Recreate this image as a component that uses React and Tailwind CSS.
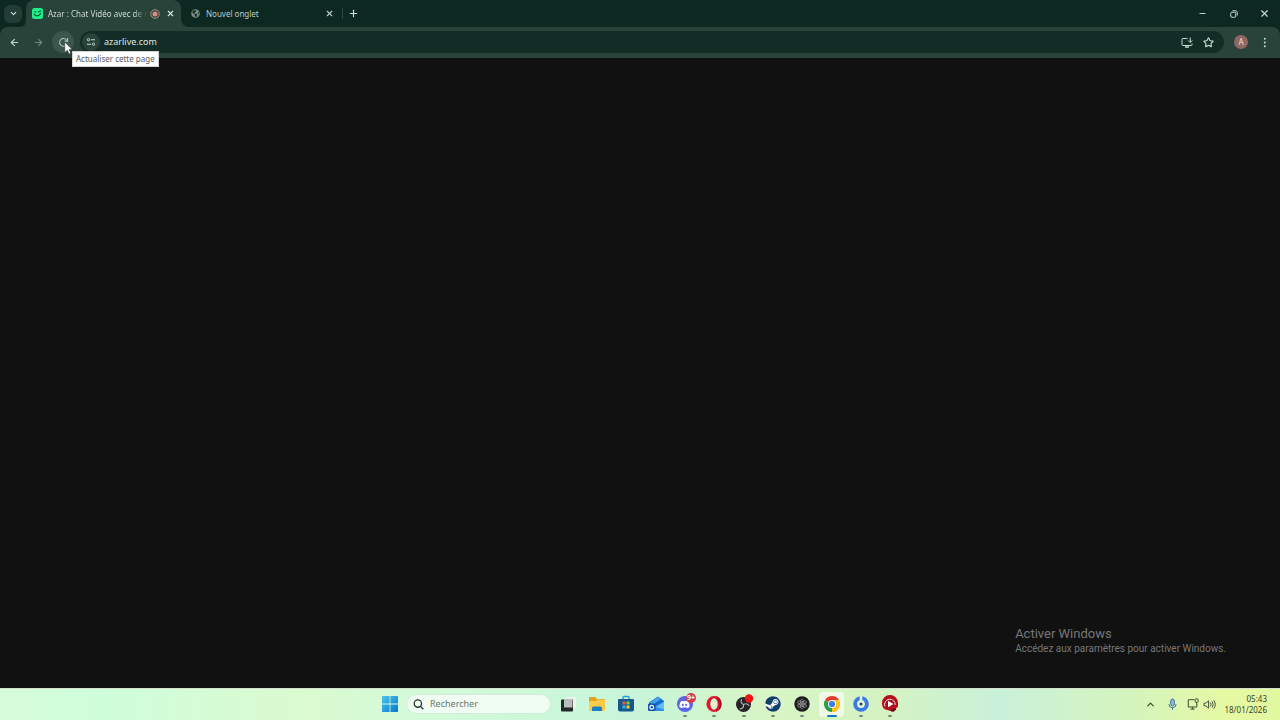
import { ArrowLeft, ArrowRight, ChevronDown, ChevronUp, Minus, Plus, Star, X } from 'lucide-react';
import { FaDiscord, FaGlobeAmericas, FaSteam } from 'react-icons/fa';

function AzarIcon() {
  return (
    <svg viewBox="0 0 22 22" className="size-[11px] shrink-0">
      <rect width="22" height="22" rx="5" fill="#1cf08a" />
      <path d="M4.500 12c2.500 5.500 10 5 12.500-1" fill="none" stroke="#0c5038" strokeWidth="2.200" strokeLinecap="round" />
      <circle cx="6.500" cy="7.500" r="1.700" fill="#0c5038" />
      <path d="M12.500 8l5-2" stroke="#0c5038" strokeWidth="2.200" strokeLinecap="round" />
    </svg>
  );
}

function RecordingIcon() {
  return (
    <svg viewBox="0 0 20 20" className="size-[10px] shrink-0">
      <circle cx="10" cy="10" r="8.500" fill="none" stroke="#bd9a8e" strokeWidth="1.800" />
      <circle cx="10" cy="10" r="5" fill="#dc8d83" />
    </svg>
  );
}

function ReloadIcon() {
  return (
    <svg viewBox="0 0 20 20" className="size-[11px]" fill="none" stroke="#b4c8c0" strokeWidth="1.900">
      <path d="M16.500 12A7 7 0 1 1 15.500 5.500L17 7" />
      <path d="M17.500 2v5.500H12" />
    </svg>
  );
}

function TuneIcon() {
  return (
    <svg viewBox="0 0 20 20" className="size-[10px]" fill="none" stroke="#c3d4cd" strokeWidth="2">
      <circle cx="5" cy="5.500" r="2.300" />
      <path d="M10 5.500h8M2 14.500h8" />
      <circle cx="15" cy="14.500" r="2.300" />
    </svg>
  );
}

function InstallIcon() {
  return (
    <svg viewBox="0 0 24 22" className="h-[11px] w-3" fill="none" stroke="#bfdcd1" strokeWidth="2">
      <path d="M13 3H3.500Q2 3 2 4.500v11Q2 17 3.500 17h17Q22 17 22 15.500V13" />
      <path d="M8 20h8" strokeWidth="3" />
      <path d="M18.500 1v9M14.500 7l4 4 4-4" />
    </svg>
  );
}

function RestoreIcon() {
  return (
    <svg viewBox="0 0 16 16" className="size-2" fill="none" stroke="#c8d6d0" strokeWidth="2">
      <rect x="1.500" y="4.500" width="10" height="10" rx="2" />
      <path d="M5 1.500h6q3.500 0 3.500 3.500V11" />
    </svg>
  );
}

function WindowsIcon() {
  return (
    <svg viewBox="0 0 16 16" className="size-4">
      <defs>
        <linearGradient id="win" x1="0" y1="0" x2="1" y2="1">
          <stop offset="0" stopColor="#4cc4ee" />
          <stop offset="1" stopColor="#0a78cc" />
        </linearGradient>
      </defs>
      <path d="M0 0h7.600v7.600H0zM8.400 0H16v7.600H8.400zM0 8.400h7.600V16H0zM8.400 8.400H16V16H8.400z" fill="url(#win)" />
    </svg>
  );
}

function TaskViewIcon() {
  return (
    <svg viewBox="0 0 18 18" className="size-[18px]">
      <rect x="6" y="2" width="11" height="11" rx="1" fill="#eef2ef" />
      <rect x="2" y="4.500" width="12" height="12" rx="1" fill="#242526" />
      <path d="M5 4h8.500v8.500H5z" fill="#b9bdbb" />
    </svg>
  );
}

function ExplorerIcon() {
  return (
    <svg viewBox="0 0 18 18" className="size-[18px]">
      <path d="M1 3q0-1 1-1h5l2 2h7q1 0 1 1v5H1z" fill="#e2a126" />
      <path d="M1 6h7l1.500-1.500H16q1 0 1 1V15q0 1-1 1H2q-1 0-1-1z" fill="#fdcb4a" />
      <path d="M4 16v-3q0-1.500 1.500-1.500h7Q14 11.500 14 13v3z" fill="#1b82c8" />
    </svg>
  );
}

function StoreIcon() {
  return (
    <svg viewBox="0 0 18 18" className="size-[18px]">
      <path d="M6 5V2.500Q6 1.500 7 1.500h4q1 0 1 1V5" fill="none" stroke="#289ed8" strokeWidth="1.400" />
      <path d="M1 5q0-1 1-1h14q1 0 1 1v9.500q0 2-2 2H3q-2 0-2-2z" fill="#15588c" />
      <path d="M5.500 6.500h3v3h-3z" fill="#f15b36" />
      <path d="M9.500 6.500h3v3h-3z" fill="#8dc83c" />
      <path d="M5.500 10.500h3v3h-3z" fill="#34b4ed" />
      <path d="M9.500 10.500h3v3h-3z" fill="#ffca3a" />
    </svg>
  );
}

function OutlookIcon() {
  return (
    <svg viewBox="0 0 18 18" className="size-[18px]">
      <path d="M2 7.500l9-6L17 6v8.500q0 1.500-1.500 1.500H4.500Q2 16 2 14z" fill="#1769c8" />
      <path d="M3 7.500L11 2l3 2-9 6.500z" fill="#3fa4ee" />
      <path d="M17 6L6 12.500 5 16h10.500q1.500 0 1.500-1.500z" fill="#2f8ee8" />
      <path d="M9 12l8-5v7.500z" fill="#67bff5" />
      <rect x="1" y="8.500" width="7.500" height="7.500" rx="1.500" fill="#0d4fa4" />
      <circle cx="4.750" cy="12.250" r="1.900" fill="none" stroke="#fff" strokeWidth="1.200" />
    </svg>
  );
}

function DiscordIcon() {
  return (
    <span className="relative flex size-4 items-center justify-center rounded-full bg-[#5865e8]">
      <FaDiscord className="size-[11px] text-white" />
      <span className="absolute -top-[3px] -right-[3px] flex size-[10px] items-center justify-center rounded-full bg-[#d83a4a] text-[7px] leading-[10px] font-bold text-white">
        9+
      </span>
    </span>
  );
}

function OperaIcon() {
  return (
    <svg viewBox="0 0 18 18" className="size-[18px]">
      <ellipse cx="9" cy="9" rx="7.600" ry="7.900" fill="#df1730" />
      <path d="M10 1.100Q16.500 2 16.500 9T10 16.900Q15 14 14.500 9T10 1.100z" fill="#a70d20" />
      <ellipse cx="9" cy="9" rx="3.700" ry="5.700" fill="#d6f5d4" />
    </svg>
  );
}

function ObsIcon() {
  return (
    <svg viewBox="0 0 18 18" className="size-[18px] overflow-visible">
      <circle cx="8.500" cy="9.500" r="7.500" fill="#242326" />
      <g fill="none" stroke="#b7b5b9" strokeWidth="1.100" strokeLinecap="round">
        <path d="M8.500 9.500Q5 8 6.500 4.500" />
        <path d="M8.500 9.500Q12 7.500 14 10.500" />
        <path d="M8.500 9.500Q9 13.500 5 14" />
      </g>
      <circle cx="14" cy="3.500" r="4.200" fill="#f01212" />
    </svg>
  );
}

function SteamIcon() {
  return (
    <span className="flex size-4 items-center justify-center rounded-full bg-white">
      <FaSteam className="size-4 text-[#123f68]" />
    </span>
  );
}

function AtomIcon() {
  return (
    <svg viewBox="0 0 18 18" className="size-[18px]">
      <circle cx="9" cy="9" r="7.700" fill="#1c1d1d" />
      <g fill="none" stroke="#8d9290" strokeWidth="0.800">
        <ellipse cx="9" cy="9" rx="1.900" ry="5" />
        <ellipse cx="9" cy="9" rx="1.900" ry="5" transform="rotate(60 9 9)" />
        <ellipse cx="9" cy="9" rx="1.900" ry="5" transform="rotate(120 9 9)" />
      </g>
      <circle cx="9" cy="9" r="1" fill="#a6aaa8" />
    </svg>
  );
}

function ChromeIcon() {
  return (
    <svg viewBox="0 0 18 18" className="size-[18px]">
      <path d="M9 9L2.070 5A8 8 0 0 1 15.930 5z" fill="#e5392d" />
      <path d="M9 9l6.930-4A8 8 0 0 1 9 17z" fill="#fcc31e" />
      <path d="M9 9v8A8 8 0 0 1 2.070 5z" fill="#2a9f4b" />
      <path d="M9 5h6.930A8 8 0 0 1 9 17l3.460-6z" fill="#fcc31e" />
      <circle cx="9" cy="9" r="4" fill="#fff" />
      <circle cx="9" cy="9" r="3.100" fill="#3d7de8" />
    </svg>
  );
}

function RingIcon() {
  return (
    <svg viewBox="0 0 18 18" className="size-[18px]">
      <circle cx="9" cy="9" r="7.800" fill="#3a79e6" />
      <circle cx="9" cy="9" r="3.900" fill="#e2f4d8" />
      <path d="M7.700 1h2.600v6H7.700z" fill="#e2f4d8" />
      <circle cx="9" cy="9" r="1.500" fill="#2f3e52" />
    </svg>
  );
}

function PlayerIcon() {
  return (
    <svg viewBox="0 0 18 18" className="size-[18px]">
      <path d="M1 8a8 8 0 0 1 16 0v3q0 2-2 2l-2 4-3-1-4-1Q1 14 1 8z" fill="#b30d1c" />
      <path d="M4 11.500A5.300 5.300 0 1 1 14.200 10" fill="#a40818" stroke="#f3dfdc" strokeWidth="1" />
      <path d="M7 5.700v6.600L12.500 9z" fill="#fff" />
      <path d="M10 16l5-2" stroke="#3c1118" strokeWidth="1.500" />
    </svg>
  );
}

const APPS = [
  { name: 'Vue des tâches', icon: TaskViewIcon },
  { name: 'Explorateur de fichiers', icon: ExplorerIcon },
  { name: 'Microsoft Store', icon: StoreIcon },
  { name: 'Outlook', icon: OutlookIcon },
  { name: 'Discord', icon: DiscordIcon, running: true },
  { name: 'Opera', icon: OperaIcon, running: true },
  { name: 'OBS Studio', icon: ObsIcon, running: true },
  { name: 'Steam', icon: SteamIcon, running: true },
  { name: 'Atom', icon: AtomIcon, running: true },
  { name: 'Google Chrome', icon: ChromeIcon, active: true },
  { name: 'Ring', icon: RingIcon, running: true },
  { name: 'Player', icon: PlayerIcon, running: true },
];

function TabStrip() {
  return (
    <div className="flex h-[27px] bg-[#29433a]">
      <div className="flex items-center rounded-br-md bg-[#0d2721] px-1">
        <button aria-label="Rechercher dans les onglets" className="flex size-[18px] items-center justify-center rounded-md bg-[#213d35] text-[#d5e2dc]">
          <ChevronDown className="size-[9px]" strokeWidth={3} />
        </button>
      </div>
      <div className="w-[155px] bg-[#0d2721]">
        <div className="flex h-full items-center rounded-t-lg bg-[#29433a] px-[6px] text-[#dce8e2]">
          <AzarIcon />
          <span className="ml-[5px] w-[100px] bg-linear-to-r from-[#dce8e2] from-85% to-[#29433a] bg-clip-text whitespace-nowrap text-transparent">
            Azar : Chat Vidéo avec de n
          </span>
          <span className="ml-[2px]">
            <RecordingIcon />
          </span>
          <button aria-label="Fermer l'onglet Azar" className="ml-auto">
            <X className="size-[9px]" strokeWidth={3} />
          </button>
        </div>
      </div>
      <div className="flex flex-1 items-center rounded-bl-lg bg-[#0d2721]">
        <div className="flex h-full w-[161px] items-center pr-2 pl-[10px] text-[#bccdc5]">
          <FaGlobeAmericas className="size-[9px] text-[#758a82]" />
          <span className="ml-[6px]">Nouvel onglet</span>
          <button aria-label="Fermer Nouvel onglet" className="ml-auto">
            <X className="size-[9px]" strokeWidth={3} />
          </button>
        </div>
        <span className="h-[11px] w-px bg-[#294a40]" />
        <button aria-label="Ajouter un onglet" className="ml-[5px] text-[#cfddd7]">
          <Plus className="size-[11px]" strokeWidth={2.5} />
        </button>
        <div className="ml-auto flex h-full text-[#c8d6d0]">
          <button aria-label="Réduire" className="flex w-[31px] items-center justify-center">
            <Minus className="size-[9px]" strokeWidth={2.5} />
          </button>
          <button aria-label="Restaurer" className="flex w-[31px] items-center justify-center">
            <RestoreIcon />
          </button>
          <button aria-label="Fermer" className="flex w-[31px] items-center justify-center">
            <X className="size-[11px]" strokeWidth={2.5} />
          </button>
        </div>
      </div>
    </div>
  );
}

function Toolbar() {
  return (
    <div className="flex h-[31px] items-center rounded-t-lg bg-[#29433a] pb-px pl-[3px]">
      <button aria-label="Précédent" className="flex w-[22px] justify-center text-[#c2d3cb]">
        <ArrowLeft className="size-[11px]" strokeWidth={2.5} />
      </button>
      <button aria-label="Suivant" className="ml-[2px] flex w-[22px] justify-center text-[#6b867b]">
        <ArrowRight className="size-[11px]" strokeWidth={2.5} />
      </button>
      <div className="relative ml-[3px]">
        <button aria-label="Actualiser" aria-describedby="reload-tip" className="flex size-[22px] items-center justify-center rounded-full bg-[#3c564c]">
          <ReloadIcon />
        </button>
        <div id="reload-tip" role="tooltip" className="absolute top-5 left-5 z-10 border border-[#d4d4d4] bg-white px-[3px] text-[8px] leading-[14px] whitespace-nowrap text-[#5a5a5a]">
          Actualiser cette page
        </div>
        <svg viewBox="0 0 12 18" className="absolute top-[10px] left-3 z-20 h-[14px] w-[9px]">
          <path d="M1 1v14l3.500-3 2 5 2.500-1-2-5h4z" fill="#fff" stroke="#26332e" strokeWidth="0.800" />
        </svg>
      </div>
      <div className="ml-[6px] flex h-[22px] flex-1 items-center rounded-full bg-[#142c26] pl-[2px] text-[#bfdcd1]">
        <button aria-label="Informations sur le site" className="flex size-[18px] items-center justify-center rounded-full bg-[#29433a]">
          <TuneIcon />
        </button>
        <input
          aria-label="Adresse"
          defaultValue="azarlive.com"
          className="ml-1 min-w-0 flex-1 bg-transparent text-[9px] leading-3 text-[#dbe8e2] outline-none"
        />
        <button aria-label="Installer Azar">
          <InstallIcon />
        </button>
        <button aria-label="Ajouter aux favoris" className="mx-[10px]">
          <Star className="size-[11px]" strokeWidth={2.5} />
        </button>
      </div>
      <button aria-label="Profil" className="ml-[10px] flex size-[14px] items-center justify-center rounded-full bg-[#8f6864] text-[8px] leading-none text-[#f1dfdc]">
        A
      </button>
      <button aria-label="Menu" className="mr-[10px] ml-3 flex w-[10px] justify-center text-[#c8d9d1]">
        <svg viewBox="0 0 4 12" className="h-[11px]" fill="currentColor">
          <circle cx="2" cy="2" r="1.100" />
          <circle cx="2" cy="6" r="1.100" />
          <circle cx="2" cy="10" r="1.100" />
        </svg>
      </button>
    </div>
  );
}

function TaskButton({ app }) {
  const Icon = app.icon;
  return (
    <button
      aria-label={app.name}
      className={`relative mx-[2px] flex h-[25px] flex-1 items-center justify-center rounded-sm ${app.active ? 'bg-[#f1f8e8]' : ''}`}
    >
      <Icon />
      {app.running && <span className="absolute bottom-0 h-[2px] w-1 rounded-full bg-[#7b8a7a]" />}
      {app.active && <span className="absolute bottom-0 h-[2px] w-[10px] rounded-full bg-[#1877c4]" />}
    </button>
  );
}

function SystemTray() {
  return (
    <div className="flex flex-1 items-center justify-end pr-[13px] text-[#39422d]">
      <button aria-label="Icônes cachées">
        <ChevronUp className="size-[11px]" strokeWidth={2.5} />
      </button>
      <svg viewBox="0 0 10 14" className="ml-3 h-[13px] w-[9px]" fill="none" stroke="#426f96" strokeWidth="1.100">
        <rect x="3" y="1" width="4" height="7.500" rx="2" fill="#8fbbe4" />
        <path d="M1 6.500q0 4 4 4t4-4M5 10.500V13" />
      </svg>
      <svg viewBox="0 0 14 14" className="ml-[10px] size-3" fill="none" stroke="currentColor" strokeWidth="1.100">
        <path d="M8.500 2H1.500v8.500h10V7M4 13h5M6.500 10.500V13" />
        <rect x="9.500" y="1" width="3.500" height="4" rx="1" />
        <path d="M11.300 5v2.500" />
      </svg>
      <svg viewBox="0 0 14 12" className="ml-1 h-[11px] w-[13px]" fill="none" stroke="currentColor" strokeWidth="1">
        <path d="M1 4.500h2L6 2v8L3 7.500H1z" />
        <path d="M8 4q1.500 2 0 4M9.800 2.700q2.500 3.300 0 6.600M11.600 1.500q3.500 4.500 0 9" />
      </svg>
      <div className="ml-2 text-right text-[8px] leading-[11px]">
        <p>05:43</p>
        <p>18/01/2026</p>
      </div>
    </div>
  );
}

function Taskbar() {
  return (
    <footer className="flex h-8 items-center border-t border-[#d4dfcc] bg-[linear-gradient(90deg,#d6fcda_0%,#cffedb_8%,#dbfad0_24%,#d2fbd8_32%,#c8f5da_50%,#d8f5c4_60%,#d5f3c2_69%,#c9f1da_78%,#d6f5bc_89%,#e6f9a2_96%,#e0f8a0_100%)] pb-px">
      <div className="flex-1 pl-5" />
      <button aria-label="Démarrer" className="shrink-0">
        <WindowsIcon />
      </button>
      <label className="ml-2 flex h-5 w-[145px] items-center rounded-full border border-[#d5ead8] bg-[#f0fdf3] pl-[6px] text-[#27332e]">
        <svg viewBox="0 0 12 12" className="size-[11px] shrink-0" fill="none" stroke="currentColor" strokeWidth="1.400">
          <circle cx="5.300" cy="5" r="4" />
          <path d="M8.200 8l3 3.200" />
        </svg>
        <input aria-label="Rechercher" placeholder="Rechercher" className="ml-[6px] min-w-0 flex-1 bg-transparent text-[9px] leading-3 outline-none placeholder:text-[#69766e]" />
      </label>
      <div className="ml-[2px] flex w-[352px] shrink-0">
        {APPS.map((app) => (
          <TaskButton key={app.name} app={app} />
        ))}
      </div>
      <SystemTray />
    </footer>
  );
}

export default function App() {
  return (
    <div className="flex min-h-screen flex-col bg-[#111111] font-['Noto_Sans','Open_Sans',sans-serif] text-[8px] leading-3">
      <header className="bg-[#0d2721]">
        <TabStrip />
        <Toolbar />
      </header>
      <main className="flex flex-1 flex-col items-end justify-end pr-[54px] pb-8 font-['Roboto',sans-serif] text-[#777777]">
        <div>
          <p className="text-[13px] leading-4">Activer Windows</p>
          <p className="text-[10px] leading-[14px]">Accédez aux paramètres pour activer Windows.</p>
        </div>
      </main>
      <Taskbar />
    </div>
  );
}
